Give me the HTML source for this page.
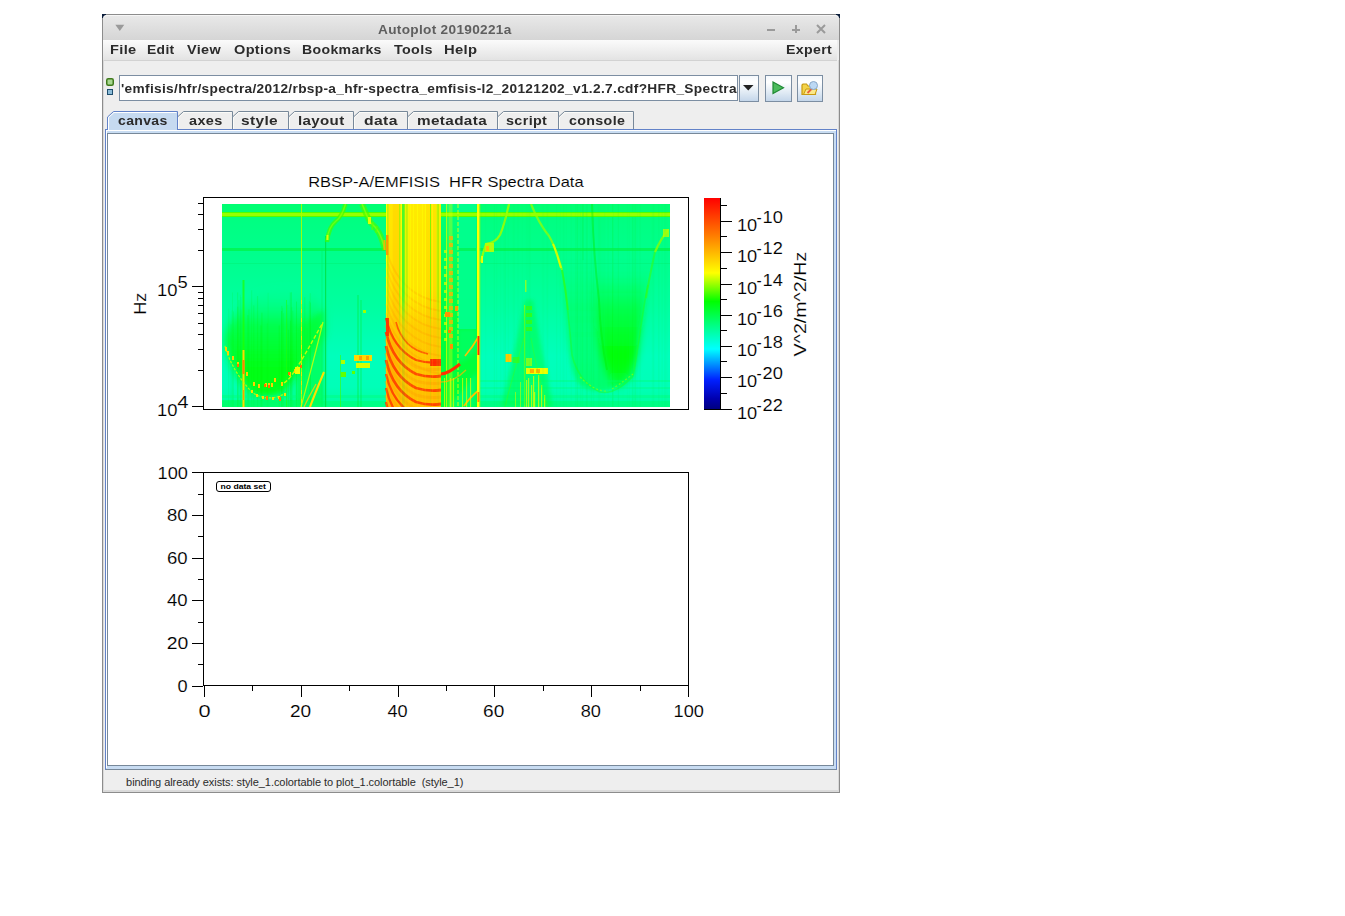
<!DOCTYPE html>
<html><head><meta charset="utf-8">
<style>
html,body{margin:0;padding:0;background:#fff;width:1345px;height:916px;overflow:hidden;position:relative;font-family:"Liberation Sans",sans-serif;}
.a{position:absolute;}
.t{position:absolute;white-space:nowrap;line-height:1;}
.b{font-weight:bold;}
#win{left:102px;top:14px;width:738px;height:779px;box-sizing:border-box;border:1px solid #8c8c8c;background:#eeeeee;}
#title{left:103px;top:15px;width:736px;height:25px;background:linear-gradient(#e9e9e9,#d5d5d5);border-radius:4px 4px 0 0;box-shadow:inset 0 1px 0 #f6f6f6;}
#menubar{left:103px;top:40px;width:734px;height:20px;background:linear-gradient(#fbfbfb,#e3e3e3);}
.menu{color:#2b2b2b;font-size:12.5px;font-weight:bold;top:44px;}
.tab{position:absolute;top:111px;height:18px;box-sizing:border-box;border:1px solid #7b8a9a;border-bottom:none;background:#eeeeee;}
.tabl{position:absolute;top:115px;font-size:12.5px;font-weight:bold;color:#2b2b2b;letter-spacing:0.7px;white-space:nowrap;line-height:1;}
.plt{font-size:16px;color:#111;}
</style></head><body>
<div id="win" class="a"></div>
<div class="a" style="left:102px;top:14px;width:4px;height:4px;background:#0b1d3a"></div><div class="a" style="left:836px;top:14px;width:4px;height:4px;background:#0b1d3a"></div><div id="title" class="a"></div>
<div class="t b" id="ttl" style="left:378.0px;top:23px;font-size:13px;color:#5e5e5e;letter-spacing:0.3px;;transform:scaleX(1.0482);transform-origin:0 0">Autoplot 20190221a</div>
<!-- window menu triangle -->
<svg class="a" style="left:115px;top:24px" width="10" height="8"><path d="M0.3 0.8 L9.3 0.8 L4.8 7 Z" fill="#9a9a9a"/></svg>
<!-- title buttons -->
<div class="a" style="left:767px;top:29px;width:8px;height:2px;background:#9a9a9a"></div>
<div class="a" style="left:792px;top:29px;width:8px;height:2px;background:#9a9a9a"></div>
<div class="a" style="left:795px;top:25px;width:2px;height:8px;background:#9a9a9a"></div>
<svg class="a" style="left:816px;top:24px" width="10" height="10"><path d="M1 1 L9 9 M9 1 L1 9" stroke="#9a9a9a" stroke-width="2"/></svg>
<div id="menubar" class="a"></div>
<div class="a" style="left:103px;top:60px;width:734px;height:1px;background:#d2d2d2"></div>
<div class="t menu" id="m0" style="left:110.4px;letter-spacing:0.3px;transform:scaleX(1.1673);transform-origin:0 0">File</div>
<div class="t menu" id="m1" style="left:146.6px;letter-spacing:0.3px;transform:scaleX(1.1093);transform-origin:0 0">Edit</div>
<div class="t menu" id="m2" style="left:186.8px;letter-spacing:0.3px;transform:scaleX(1.1534);transform-origin:0 0">View</div>
<div class="t menu" id="m3" style="left:233.8px;letter-spacing:0.3px;transform:scaleX(1.1605);transform-origin:0 0">Options</div>
<div class="t menu" id="m4" style="left:302.2px;letter-spacing:0.3px;transform:scaleX(1.1265);transform-origin:0 0">Bookmarks</div>
<div class="t menu" id="m5" style="left:394.4px;letter-spacing:0.3px;transform:scaleX(1.1441);transform-origin:0 0">Tools</div>
<div class="t menu" id="m6" style="left:443.8px;letter-spacing:0.3px;transform:scaleX(1.1828);transform-origin:0 0">Help</div>
<div class="t menu" id="m7" style="left:785.6px;letter-spacing:0.3px;transform:scaleX(1.1316);transform-origin:0 0">Expert</div>

<!-- toolbar -->
<svg class="a" style="left:106px;top:78px" width="9" height="18">
<rect x="0.75" y="0.75" width="6.5" height="6.5" rx="1.5" fill="#a8d890" stroke="#3f7a1c" stroke-width="1.5"/>
<rect x="1.5" y="11.5" width="5" height="5" fill="#8cbcd8" stroke="#1e4e6e" stroke-width="1"/>
</svg>
<div class="a" style="left:119px;top:75px;width:619px;height:26px;box-sizing:border-box;border:1px solid #7c8ea2;background:#fff;"></div>
<div class="a" style="left:120px;top:76px;width:617px;height:24px;overflow:hidden;">
<div class="t b" id="url" style="left:1.0px;top:7px;font-size:12.5px;color:#2b2b2b;letter-spacing:0.3px;;transform:scaleX(1.0945);transform-origin:0 0">'emfisis/hfr/spectra/2012/rbsp-a_hfr-spectra_emfisis-l2_20121202_v1.2.7.cdf?HFR_Spectra</div>
</div>
<div class="a" style="left:739px;top:75px;width:20px;height:27px;box-sizing:border-box;border:1px solid #7c8ea2;background:linear-gradient(#f4f8fc,#ffffff 25%,#dde8f3 70%,#c4d6ea);"></div>
<svg class="a" style="left:743px;top:85px" width="11" height="7"><path d="M0 0 L10.5 0 L5.25 5.5 Z" fill="#222"/></svg>
<div class="a" style="left:765px;top:75px;width:27px;height:27px;box-sizing:border-box;border:1px solid #7c8ea2;background:linear-gradient(#f4f8fc,#ffffff 25%,#dde8f3 70%,#c4d6ea);"></div>
<svg class="a" style="left:772px;top:81px" width="13" height="14"><path d="M1 1 L11.5 6.8 L1 12.6 Z" fill="#4cbb5c" stroke="#1f8a34" stroke-width="1.2"/></svg>
<div class="a" style="left:797px;top:75px;width:26px;height:27px;box-sizing:border-box;border:1px solid #7c8ea2;background:linear-gradient(#f4f8fc,#ffffff 25%,#dde8f3 70%,#c4d6ea);"></div>
<svg class="a" style="left:801px;top:80px" width="18" height="17">
<path d="M1 5 L1 14.5 L14.5 14.5 L14.5 6 L7 6 L5.5 4 L2 4 Z" fill="#f3d34a" stroke="#c89a10" stroke-width="1.2"/>
<path d="M2.5 14.5 L5 9 L16 9 L14 14.5 Z" fill="#fbe88a" stroke="#c89a10" stroke-width="1"/>
<path d="M6.5 13 L11 8.5" stroke="#e8603a" stroke-width="1.8"/>
<circle cx="12.5" cy="5.5" r="4" fill="#bcd8f4" stroke="#8aa8c8" stroke-width="1"/>
</svg>
<!-- canvas panel -->
<div class="a" style="left:105px;top:129px;width:732px;height:641px;box-sizing:border-box;border:1px solid #6282c8;border-bottom-color:#778899;background:#c8dcf2;"></div>
<div class="a" style="left:106px;top:130px;width:730px;height:1px;background:#fff"></div>
<div class="a" style="left:106px;top:130px;width:1px;height:638px;background:#fff"></div>
<div class="a" style="left:107px;top:133px;width:727px;height:633px;box-sizing:border-box;border:1px solid #778899;background:#fff;"></div>
<!-- tabs -->
<svg class="a" style="left:0;top:0" width="840" height="140">
<path d="M177.5 129 L177.5 117 L183.5 111.5 L232.5 111.5 L232.5 129" fill="#eeeeee" stroke="#778899" stroke-width="1"/>
<path d="M178.5 129 L178.5 117.5 L184 112.5 L231.5 112.5" fill="none" stroke="#fbfbf8" stroke-width="1"/>
<path d="M232.5 129 L232.5 117 L238.5 111.5 L288.5 111.5 L288.5 129" fill="#eeeeee" stroke="#778899" stroke-width="1"/>
<path d="M233.5 129 L233.5 117.5 L239 112.5 L287.5 112.5" fill="none" stroke="#fbfbf8" stroke-width="1"/>
<path d="M288.5 129 L288.5 117 L294.5 111.5 L353.5 111.5 L353.5 129" fill="#eeeeee" stroke="#778899" stroke-width="1"/>
<path d="M289.5 129 L289.5 117.5 L295 112.5 L352.5 112.5" fill="none" stroke="#fbfbf8" stroke-width="1"/>
<path d="M353.5 129 L353.5 117 L359.5 111.5 L407.5 111.5 L407.5 129" fill="#eeeeee" stroke="#778899" stroke-width="1"/>
<path d="M354.5 129 L354.5 117.5 L360 112.5 L406.5 112.5" fill="none" stroke="#fbfbf8" stroke-width="1"/>
<path d="M407.5 129 L407.5 117 L413.5 111.5 L497.5 111.5 L497.5 129" fill="#eeeeee" stroke="#778899" stroke-width="1"/>
<path d="M408.5 129 L408.5 117.5 L414 112.5 L496.5 112.5" fill="none" stroke="#fbfbf8" stroke-width="1"/>
<path d="M497.5 129 L497.5 117 L503.5 111.5 L558.5 111.5 L558.5 129" fill="#eeeeee" stroke="#778899" stroke-width="1"/>
<path d="M498.5 129 L498.5 117.5 L504 112.5 L557.5 112.5" fill="none" stroke="#fbfbf8" stroke-width="1"/>
<path d="M558.5 129 L558.5 117 L564.5 111.5 L633.5 111.5 L633.5 129" fill="#eeeeee" stroke="#778899" stroke-width="1"/>
<path d="M559.5 129 L559.5 117.5 L565 112.5 L632.5 112.5" fill="none" stroke="#fbfbf8" stroke-width="1"/>
<path d="M107.5 130 L107.5 117 L113.5 111.5 L177.5 111.5 L177.5 130" fill="#c6daf0" stroke="#6282c8" stroke-width="1"/>
<path d="M108.5 130 L108.5 117.5 L114 112.5 L176.5 112.5" fill="none" stroke="#ffffff" stroke-width="1"/>
</svg>
<div class="tabl" id="tb0" style="left:118.4px;letter-spacing:0.3px;transform:scaleX(1.1212);transform-origin:0 0">canvas</div>
<div class="tabl" id="tb1" style="left:188.8px;letter-spacing:0.3px;transform:scaleX(1.1553);transform-origin:0 0">axes</div>
<div class="tabl" id="tb2" style="left:240.8px;letter-spacing:0.3px;transform:scaleX(1.2357);transform-origin:0 0">style</div>
<div class="tabl" id="tb3" style="left:297.6px;letter-spacing:0.3px;transform:scaleX(1.2047);transform-origin:0 0">layout</div>
<div class="tabl" id="tb4" style="left:363.8px;letter-spacing:0.3px;transform:scaleX(1.2554);transform-origin:0 0">data</div>
<div class="tabl" id="tb5" style="left:417.2px;letter-spacing:0.3px;transform:scaleX(1.2227);transform-origin:0 0">metadata</div>
<div class="tabl" id="tb6" style="left:506.2px;letter-spacing:0.3px;transform:scaleX(1.1505);transform-origin:0 0">script</div>
<div class="tabl" id="tb7" style="left:568.6px;letter-spacing:0.3px;transform:scaleX(1.1390);transform-origin:0 0">console</div>
<svg class="a" style="left:0;top:0" width="1345" height="916">
<!--spec--><defs>
<clipPath id="spc"><rect x="222" y="204" width="448" height="203"/></clipPath>
<linearGradient id="bgv" gradientUnits="userSpaceOnUse" x1="0" y1="204" x2="0" y2="407">
<stop offset="0" stop-color="#00ff7c"/><stop offset="0.05" stop-color="#00ff80"/><stop offset="0.3" stop-color="#00ff90"/><stop offset="0.5" stop-color="#00ffa0"/>
<stop offset="0.75" stop-color="#00ffbc"/><stop offset="0.9" stop-color="#00ffb8"/><stop offset="1" stop-color="#00ff9c"/></linearGradient>
<linearGradient id="gU1" gradientUnits="userSpaceOnUse" x1="0" y1="285" x2="0" y2="395">
<stop offset="0" stop-color="#00ff90" stop-opacity="0"/><stop offset="0.35" stop-color="#00ff50"/><stop offset="0.75" stop-color="#00ff18"/><stop offset="1" stop-color="#00ff10"/></linearGradient>
<radialGradient id="gU2" cx="0.5" cy="0.45" r="0.5">
<stop offset="0" stop-color="#00ff00"/><stop offset="0.5" stop-color="#00ff18"/><stop offset="1" stop-color="#00ff60" stop-opacity="0"/></radialGradient>
<linearGradient id="ybv" gradientUnits="userSpaceOnUse" x1="0" y1="204" x2="0" y2="407">
<stop offset="0" stop-color="#ffe400"/><stop offset="0.4" stop-color="#ffdc00"/><stop offset="0.6" stop-color="#ffd000"/><stop offset="1" stop-color="#ffc400"/></linearGradient>
<linearGradient id="gbv" gradientUnits="userSpaceOnUse" x1="0" y1="204" x2="0" y2="407">
<stop offset="0" stop-color="#00ff80"/><stop offset="0.3" stop-color="#00ff60"/><stop offset="0.6" stop-color="#00ff40"/><stop offset="1" stop-color="#00ff38"/></linearGradient>
<filter id="bl4" filterUnits="userSpaceOnUse" x="200" y="180" width="500" height="250"><feGaussianBlur stdDeviation="4"/></filter>
<filter id="bl2" filterUnits="userSpaceOnUse" x="200" y="180" width="500" height="250"><feGaussianBlur stdDeviation="2"/></filter>
<filter id="bl1" filterUnits="userSpaceOnUse" x="200" y="180" width="500" height="250"><feGaussianBlur stdDeviation="0.7"/></filter>

</defs>
<g clip-path="url(#spc)">
<rect x="222" y="204" width="448" height="203" fill="url(#bgv)"/>
<path d="M224 340 C 232 300, 270 282, 300 290 C 315 295, 322 300, 324 310 L 324 335 C 312 350, 300 372, 284 392 C 272 400, 256 399, 248 390 C 238 378, 228 360, 224 340 Z" fill="url(#gU1)" filter="url(#bl4)"/>
<path d="M296 330 L 324 310 L 324 407 L 296 407 Z" fill="#00ff30" fill-opacity="0.6" filter="url(#bl2)"/>
<path d="M246 392 C 258 402, 275 402, 290 393 L 296 407 L 240 407 Z" fill="#00ff90" fill-opacity="0.55" filter="url(#bl2)"/>
<rect x="222" y="400" width="80" height="7" fill="#00ff50" fill-opacity="0.5"/>
<rect x="257.1" y="296.0" width="1" height="111.0" fill="#00f000" fill-opacity="0.19"/>
<rect x="233.0" y="311.4" width="1" height="95.6" fill="#00f000" fill-opacity="0.14"/>
<rect x="231.6" y="310.3" width="1" height="96.7" fill="#00f000" fill-opacity="0.09"/>
<rect x="267.6" y="292.8" width="1" height="114.2" fill="#00f000" fill-opacity="0.1"/>
<rect x="266.8" y="323.1" width="1" height="83.9" fill="#00f000" fill-opacity="0.1"/>
<rect x="247.4" y="315.1" width="1" height="91.9" fill="#00f000" fill-opacity="0.24"/>
<rect x="281.4" y="305.9" width="1" height="101.1" fill="#00f000" fill-opacity="0.25"/>
<rect x="230.5" y="324.3" width="1" height="82.7" fill="#00f000" fill-opacity="0.13"/>
<rect x="239.8" y="294.7" width="1" height="112.3" fill="#00f000" fill-opacity="0.13"/>
<rect x="304.3" y="297.2" width="1" height="109.8" fill="#00f000" fill-opacity="0.18"/>
<rect x="287.3" y="304.9" width="1" height="102.1" fill="#00f000" fill-opacity="0.17"/>
<rect x="232.0" y="292.4" width="1" height="114.6" fill="#00f000" fill-opacity="0.12"/>
<rect x="291.3" y="307.1" width="1" height="99.9" fill="#00f000" fill-opacity="0.13"/>
<rect x="282.2" y="308.1" width="1" height="98.9" fill="#00f000" fill-opacity="0.13"/>
<rect x="302.3" y="318.0" width="1" height="89.0" fill="#00f000" fill-opacity="0.12"/>
<rect x="281.1" y="311.0" width="1" height="96.0" fill="#00f000" fill-opacity="0.23"/>
<rect x="296.0" y="301.5" width="1" height="105.5" fill="#00f000" fill-opacity="0.25"/>
<rect x="237.3" y="306.7" width="1" height="100.3" fill="#00f000" fill-opacity="0.21"/>
<rect x="240.6" y="309.6" width="1" height="97.4" fill="#00f000" fill-opacity="0.09"/>
<rect x="290.1" y="320.6" width="1" height="86.4" fill="#00f000" fill-opacity="0.18"/>
<rect x="310.0" y="302.5" width="1" height="104.5" fill="#00f000" fill-opacity="0.2"/>
<rect x="283.1" y="313.2" width="1" height="93.8" fill="#00f000" fill-opacity="0.16"/>
<rect x="306.6" y="327.8" width="1" height="79.2" fill="#00f000" fill-opacity="0.16"/>
<rect x="289.8" y="292.4" width="1" height="114.6" fill="#00f000" fill-opacity="0.2"/>
<rect x="288.1" y="329.7" width="1" height="77.3" fill="#00f000" fill-opacity="0.22"/>
<rect x="253.3" y="305.4" width="1" height="101.6" fill="#00f000" fill-opacity="0.19"/>
<rect x="228.2" y="308.5" width="1" height="98.5" fill="#00f000" fill-opacity="0.11"/>
<rect x="237.2" y="292.4" width="1" height="114.6" fill="#00f000" fill-opacity="0.21"/>
<rect x="238.4" y="299.9" width="1" height="107.1" fill="#00f000" fill-opacity="0.15"/>
<rect x="309.7" y="293.2" width="1" height="113.8" fill="#00f000" fill-opacity="0.16"/>
<rect x="278.7" y="325.3" width="1" height="81.7" fill="#00f000" fill-opacity="0.22"/>
<rect x="308.9" y="301.1" width="1" height="105.9" fill="#00f000" fill-opacity="0.15"/>
<rect x="260.4" y="325.4" width="1" height="81.6" fill="#00f000" fill-opacity="0.24"/>
<rect x="240.5" y="297.0" width="1" height="110.0" fill="#00f000" fill-opacity="0.12"/>
<rect x="248.4" y="309.4" width="1" height="97.6" fill="#00f000" fill-opacity="0.18"/>
<rect x="251.2" y="290.2" width="1" height="116.8" fill="#00f000" fill-opacity="0.15"/>
<rect x="261.4" y="312.7" width="1" height="94.3" fill="#00f000" fill-opacity="0.24"/>
<rect x="292.3" y="310.6" width="1" height="96.4" fill="#00f000" fill-opacity="0.18"/>
<rect x="290.9" y="292.2" width="1" height="114.8" fill="#00f000" fill-opacity="0.23"/>
<rect x="300.9" y="325.0" width="1" height="82.0" fill="#00f000" fill-opacity="0.22"/>
<linearGradient id="gRU" gradientUnits="userSpaceOnUse" x1="0" y1="260" x2="0" y2="395">
<stop offset="0" stop-color="#00ff50" stop-opacity="0"/><stop offset="0.35" stop-color="#00ff48" stop-opacity="0.45"/><stop offset="1" stop-color="#00ff40" stop-opacity="0.6"/></linearGradient>
<linearGradient id="gRI" gradientUnits="userSpaceOnUse" x1="0" y1="275" x2="0" y2="390">
<stop offset="0" stop-color="#00ff30" stop-opacity="0"/><stop offset="0.35" stop-color="#00ff20" stop-opacity="0.6"/><stop offset="0.7" stop-color="#00ff00" stop-opacity="0.95"/><stop offset="1" stop-color="#00ff10" stop-opacity="0.7"/></linearGradient>
<path d="M553 240 C 560 260, 565 300, 567 330 C 569 360, 572 375, 580 385 C 592 394, 612 394, 632 377 C 638 345, 645 300, 652 268 C 656 255, 662 240, 668 232 L 640 225 L 580 225 Z" fill="url(#gRU)" filter="url(#bl2)"/>
<path d="M590 215 C 592 260, 594 300, 598 335 C 602 360, 606 378, 616 387 C 627 385, 633 372, 637 352 C 641 325, 645 295, 649 260 L 650 215 Z" fill="url(#gRI)" filter="url(#bl4)"/>
<rect x="602.5" y="204" width="1" height="203" fill="#00e800" fill-opacity="0.04"/>
<rect x="582.2" y="204" width="1" height="203" fill="#00e800" fill-opacity="0.05"/>
<rect x="579.4" y="204" width="1" height="203" fill="#00e800" fill-opacity="0.02"/>
<rect x="589.6" y="204" width="1" height="203" fill="#00e800" fill-opacity="0.03"/>
<rect x="598.8" y="204" width="1" height="203" fill="#00e800" fill-opacity="0.02"/>
<rect x="575.0" y="204" width="1" height="203" fill="#00e800" fill-opacity="0.03"/>
<rect x="582.1" y="204" width="1" height="203" fill="#00e800" fill-opacity="0.04"/>
<rect x="576.8" y="204" width="1" height="203" fill="#00e800" fill-opacity="0.06"/>
<rect x="618.0" y="204" width="1" height="203" fill="#00e800" fill-opacity="0.03"/>
<rect x="592.7" y="204" width="1" height="203" fill="#00e800" fill-opacity="0.04"/>
<rect x="600.5" y="204" width="1" height="203" fill="#00e800" fill-opacity="0.03"/>
<rect x="634.4" y="204" width="1" height="203" fill="#00e800" fill-opacity="0.07"/>
<rect x="607.6" y="204" width="1" height="203" fill="#00e800" fill-opacity="0.04"/>
<rect x="581.0" y="204" width="1" height="203" fill="#00e800" fill-opacity="0.03"/>
<rect x="599.0" y="204" width="1" height="203" fill="#00e800" fill-opacity="0.03"/>
<rect x="633.0" y="204" width="1" height="203" fill="#00e800" fill-opacity="0.03"/>
<rect x="576.6" y="204" width="1" height="203" fill="#00e800" fill-opacity="0.07"/>
<rect x="612.0" y="204" width="1" height="203" fill="#00e800" fill-opacity="0.03"/>
<rect x="613.0" y="204" width="1" height="203" fill="#00e800" fill-opacity="0.02"/>
<rect x="612.0" y="204" width="1" height="203" fill="#00e800" fill-opacity="0.07"/>
<rect x="635.4" y="204" width="1" height="203" fill="#00e800" fill-opacity="0.05"/>
<rect x="593.3" y="204" width="1" height="203" fill="#00e800" fill-opacity="0.04"/>
<rect x="586.7" y="204" width="1" height="203" fill="#00e800" fill-opacity="0.06"/>
<rect x="612.3" y="204" width="1" height="203" fill="#00e800" fill-opacity="0.06"/>
<rect x="598.1" y="204" width="1" height="203" fill="#00e800" fill-opacity="0.03"/>
<rect x="631.8" y="204" width="1" height="203" fill="#00e800" fill-opacity="0.07"/>
<rect x="634.7" y="204" width="1" height="203" fill="#00e800" fill-opacity="0.06"/>
<rect x="632.3" y="204" width="1" height="203" fill="#00e800" fill-opacity="0.06"/>
<rect x="590.9" y="204" width="1" height="203" fill="#00e800" fill-opacity="0.05"/>
<rect x="599.9" y="204" width="1" height="203" fill="#00e800" fill-opacity="0.02"/>
<rect x="222" y="395" width="448" height="3" fill="#00ff70" fill-opacity="0.35"/>
<rect x="222" y="401" width="448" height="6" fill="#00ff60" fill-opacity="0.4"/>
<rect x="480" y="380" width="190" height="2" fill="#00ff70" fill-opacity="0.35"/>
<rect x="480" y="387" width="190" height="2" fill="#00ff70" fill-opacity="0.3"/>
<rect x="222" y="204" width="448" height="8" fill="#00ff60" fill-opacity="0.35"/>
<rect x="222" y="212" width="448" height="5" fill="#50ff00"/>
<rect x="222" y="213" width="448" height="3" fill="#98ff00"/>
<rect x="222" y="248" width="448" height="3" fill="#00f448" fill-opacity="0.75"/>
<rect x="222" y="263" width="448" height="1" fill="#00f070" fill-opacity="0.45"/>
<rect x="301" y="204" width="1" height="203" fill="#a8ff00" fill-opacity="0.9"/>
<rect x="301" y="300" width="1" height="4" fill="#ffe000" fill-opacity="0.8"/>
<rect x="301" y="309" width="1" height="4" fill="#ffe000" fill-opacity="0.8"/>
<rect x="301" y="318" width="1" height="4" fill="#ffe000" fill-opacity="0.8"/>
<rect x="301" y="327" width="1" height="4" fill="#ffe000" fill-opacity="0.8"/>
<rect x="301" y="336" width="1" height="4" fill="#ffe000" fill-opacity="0.8"/>
<rect x="301" y="345" width="1" height="4" fill="#ffe000" fill-opacity="0.8"/>
<rect x="301" y="354" width="1" height="4" fill="#ffe000" fill-opacity="0.8"/>
<rect x="301" y="363" width="1" height="4" fill="#ffe000" fill-opacity="0.8"/>
<rect x="301" y="372" width="1" height="4" fill="#ffe000" fill-opacity="0.8"/>
<rect x="301" y="381" width="1" height="4" fill="#ffe000" fill-opacity="0.8"/>
<rect x="301" y="390" width="1" height="4" fill="#ffe000" fill-opacity="0.8"/>
<rect x="301" y="399" width="1" height="4" fill="#ffe000" fill-opacity="0.8"/>
<rect x="242.5" y="280" width="2" height="127" fill="#20ff00" fill-opacity="0.7"/>
<rect x="242.5" y="350" width="2" height="57" fill="#ffd800"/>
<rect x="242.5" y="360" width="2" height="14" fill="#ff8000"/>
<rect x="243" y="390" width="1" height="10" fill="#ff9000" fill-opacity="0.8"/>
<rect x="325" y="236" width="1.2" height="171" fill="#00e040" fill-opacity="0.8"/>
<rect x="321.5" y="250" width="1" height="157" fill="#00f060" fill-opacity="0.5"/>
<rect x="357.5" y="295" width="1" height="112" fill="#00f040" fill-opacity="0.7"/>
<rect x="360.5" y="300" width="1" height="107" fill="#00f040" fill-opacity="0.6"/>
<rect x="340" y="355" width="1" height="52" fill="#40ff00" fill-opacity="0.6"/>
<rect x="286" y="300" width="1" height="107" fill="#20ff00" fill-opacity="0.5"/>
<path d="M225 346 C 229 362, 240 380, 252 392 C 260 399, 274 400, 284 394" fill="none" stroke="#c0ff00" stroke-width="1.2" stroke-opacity="0.85" stroke-dasharray="2.5 1.5"/>
<path d="M284 383 C 292 378, 302 360, 322 324" fill="none" stroke="#d0ff00" stroke-width="1.4" stroke-opacity="0.9" stroke-dasharray="4 2"/>
<rect x="225" y="347" width="2" height="4" fill="#ffd000" fill-opacity="1.0"/>
<rect x="227" y="351" width="2" height="4" fill="#ffd000" fill-opacity="1.0"/>
<rect x="232" y="356" width="2" height="4" fill="#ffd000" fill-opacity="1.0"/>
<rect x="237" y="362" width="2" height="4" fill="#ffd000" fill-opacity="1.0"/>
<rect x="246" y="372" width="2" height="4" fill="#ffd000" fill-opacity="1.0"/>
<rect x="253" y="382" width="2" height="4" fill="#ffd000" fill-opacity="1.0"/>
<rect x="258" y="384" width="2" height="4" fill="#ffd000" fill-opacity="1.0"/>
<rect x="265" y="383" width="2" height="4" fill="#ffd000" fill-opacity="1.0"/>
<rect x="268" y="383" width="2" height="4" fill="#ffd000" fill-opacity="1.0"/>
<rect x="271" y="383" width="2" height="4" fill="#ffd000" fill-opacity="1.0"/>
<rect x="274" y="378" width="2" height="4" fill="#ffd000" fill-opacity="1.0"/>
<rect x="281" y="382" width="2" height="4" fill="#ffd000" fill-opacity="1.0"/>
<rect x="289" y="372" width="2" height="4" fill="#ffd000" fill-opacity="1.0"/>
<rect x="294" y="369" width="2" height="4" fill="#ffd000" fill-opacity="1.0"/>
<rect x="237" y="364" width="2" height="3" fill="#ff7000" fill-opacity="1.0"/>
<rect x="264" y="384" width="2" height="3" fill="#ff7000" fill-opacity="1.0"/>
<rect x="268" y="385" width="2" height="3" fill="#ff7000" fill-opacity="1.0"/>
<rect x="288" y="372" width="2" height="3" fill="#ff7000" fill-opacity="1.0"/>
<rect x="300" y="365" width="2" height="3" fill="#ff7000" fill-opacity="1.0"/>
<rect x="295" y="367" width="5" height="7" fill="#eeff00"/>
<rect x="251" y="390" width="2" height="3" fill="#ffe000" fill-opacity="1.0"/>
<rect x="256" y="394" width="2" height="3" fill="#ffe000" fill-opacity="1.0"/>
<rect x="262" y="396" width="2" height="3" fill="#ffe000" fill-opacity="1.0"/>
<rect x="266" y="397" width="2" height="3" fill="#ffe000" fill-opacity="1.0"/>
<rect x="272" y="397" width="2" height="3" fill="#ffe000" fill-opacity="1.0"/>
<rect x="278" y="396" width="2" height="3" fill="#ffe000" fill-opacity="1.0"/>
<rect x="284" y="393" width="2" height="3" fill="#ffe000" fill-opacity="1.0"/>
<rect x="266" y="396" width="2" height="4" fill="#ff8000" fill-opacity="1.0"/>
<rect x="279" y="397" width="2" height="4" fill="#ff8000" fill-opacity="1.0"/>
<path d="M301 407 C 306 388, 314 360, 323 322" fill="none" stroke="#d8ff00" stroke-width="1.2" stroke-opacity="0.8"/>
<path d="M310 407 C 314 396, 319 384, 324 372" fill="none" stroke="#ffe000" stroke-width="2"/>
<path d="M304 407 C 309 396, 313 390, 316 384" fill="none" stroke="#ffd000" stroke-width="1.2" stroke-opacity="0.8"/>
<path d="M327 242 C 328 232, 331 225, 336 221 C 340 218, 343 213, 345.5 204" fill="none" stroke="#40ff00" stroke-width="4.5" stroke-opacity="0.7" filter="url(#bl1)"/>
<path d="M327 240 C 328 231, 331 225, 336 221 C 340 218, 343 213, 345.5 204" fill="none" stroke="#a8ff00" stroke-width="1.4" stroke-opacity="0.55"/>
<path d="M362 204 C 365 210, 367 218, 371 223 C 377 228, 381 234, 385 250" fill="none" stroke="#40ff00" stroke-width="6" stroke-opacity="0.65" filter="url(#bl1)"/>
<path d="M362 204 C 365 210, 367 218, 371 223 C 377 228, 381 234, 385 250" fill="none" stroke="#b0ff00" stroke-width="1.6" stroke-opacity="0.55"/>
<rect x="368" y="217" width="3" height="7" fill="#f0ff00" fill-opacity="0.9"/>
<rect x="326.5" y="235" width="2" height="5" fill="#e8ff00" fill-opacity="0.9"/>
<rect x="383.5" y="240" width="2" height="10" fill="#ffb000" fill-opacity="0.9"/>
<path d="M373 222 L 372 230 M 377 226 L 376 233" fill="none" stroke="#60ff00" stroke-width="1.5" stroke-opacity="0.7"/>
<rect x="341" y="360" width="4" height="4" fill="#b0ff00"/>
<rect x="341" y="372" width="5" height="5" fill="#60ff00"/>
<rect x="352" y="371" width="3" height="3" fill="#60ff00"/>
<rect x="354" y="355" width="18" height="6" fill="#ffd800"/>
<rect x="356" y="363" width="14" height="5" fill="#d8ff00"/>
<rect x="363" y="310" width="3" height="3" fill="#a0ff00"/>
<rect x="359" y="356" width="3" height="4" fill="#ffa000"/>
<rect x="366" y="356" width="3" height="4" fill="#ffa000"/>
<rect x="386" y="204" width="55" height="203" fill="url(#ybv)"/>
<path d="M386 250 C 395 280, 412 298, 441 302" fill="none" stroke="#ffa000" stroke-width="2" stroke-opacity="0.35"/>
<path d="M386 259 C 395 289, 412 307, 441 311" fill="none" stroke="#ffa000" stroke-width="2" stroke-opacity="0.35"/>
<path d="M386 268 C 395 298, 412 316, 441 320" fill="none" stroke="#ffa000" stroke-width="2" stroke-opacity="0.35"/>
<path d="M386 277 C 395 307, 412 325, 441 329" fill="none" stroke="#ffa000" stroke-width="2" stroke-opacity="0.35"/>
<path d="M386 286 C 395 316, 412 334, 441 338" fill="none" stroke="#ffa000" stroke-width="2" stroke-opacity="0.35"/>
<path d="M386 295 C 395 325, 412 343, 441 347" fill="none" stroke="#ffa000" stroke-width="2" stroke-opacity="0.35"/>
<path d="M386 304 C 395 334, 412 352, 441 356" fill="none" stroke="#ffa000" stroke-width="2" stroke-opacity="0.35"/>
<path d="M386 313 C 395 343, 412 361, 441 365" fill="none" stroke="#ffa000" stroke-width="2" stroke-opacity="0.35"/>
<path d="M386 322 C 395 352, 412 370, 441 374" fill="none" stroke="#ffa000" stroke-width="2" stroke-opacity="0.35"/>
<linearGradient id="stf" gradientUnits="userSpaceOnUse" x1="0" y1="204" x2="0" y2="407">
<stop offset="0" stop-color="#fff" stop-opacity="1"/><stop offset="0.45" stop-color="#fff" stop-opacity="1"/><stop offset="0.6" stop-color="#fff" stop-opacity="0.25"/><stop offset="1" stop-color="#fff" stop-opacity="0.15"/></linearGradient>
<mask id="stm" maskUnits="userSpaceOnUse" x="380" y="204" width="70" height="203"><rect x="380" y="204" width="70" height="203" fill="url(#stf)"/></mask>
<linearGradient id="orl" gradientUnits="userSpaceOnUse" x1="0" y1="290" x2="0" y2="407">
<stop offset="0" stop-color="#ff9800" stop-opacity="0"/><stop offset="0.3" stop-color="#ff9800" stop-opacity="0.2"/><stop offset="1" stop-color="#ff9000" stop-opacity="0.3"/></linearGradient>
<rect x="386" y="290" width="55" height="117" fill="url(#orl)" fill-opacity="0.6"/>
<path d="M386 325 C 390 343, 400 359, 416 367 C 426 370, 434 370, 441 369" fill="none" stroke="#ff9a00" stroke-width="3" stroke-opacity="0.4"/>
<path d="M386 339 C 390 357, 400 373, 416 381 C 426 384, 434 384, 441 383" fill="none" stroke="#ff9a00" stroke-width="3" stroke-opacity="0.4"/>
<path d="M386 353 C 390 371, 400 387, 416 395 C 426 398, 434 398, 441 397" fill="none" stroke="#ff9a00" stroke-width="3" stroke-opacity="0.4"/>
<path d="M386 367 C 390 385, 400 401, 416 409 C 426 412, 434 412, 441 411" fill="none" stroke="#ff9a00" stroke-width="3" stroke-opacity="0.4"/>
<path d="M386 381 C 390 399, 400 415, 416 423 C 426 426, 434 426, 441 425" fill="none" stroke="#ff9a00" stroke-width="3" stroke-opacity="0.4"/>
<path d="M386 395 C 390 413, 400 429, 416 437 C 426 440, 434 440, 441 439" fill="none" stroke="#ff9a00" stroke-width="3" stroke-opacity="0.4"/>
<path d="M386 318 C 390 336, 400 352, 416 360 C 426 363, 434 363, 441 362" fill="none" stroke="#ff3000" stroke-width="2.3" stroke-opacity="0.85"/>
<path d="M386 332 C 390 350, 400 366, 416 374 C 426 377, 434 377, 441 376" fill="none" stroke="#ff3000" stroke-width="2.8" stroke-opacity="0.85"/>
<path d="M386 346 C 390 364, 400 380, 416 388 C 426 391, 434 391, 441 390" fill="none" stroke="#ff3000" stroke-width="2.8" stroke-opacity="0.85"/>
<path d="M386 360 C 390 378, 400 394, 416 402 C 426 405, 434 405, 441 404" fill="none" stroke="#ff3000" stroke-width="2.8" stroke-opacity="0.85"/>
<path d="M386 374 C 390 392, 400 408, 416 416 C 426 419, 434 419, 441 418" fill="none" stroke="#ff3000" stroke-width="2.3" stroke-opacity="0.85"/>
<path d="M386 388 C 390 406, 400 422, 416 430 C 426 433, 434 433, 441 432" fill="none" stroke="#ff3000" stroke-width="2.3" stroke-opacity="0.85"/>
<path d="M386 402 C 390 420, 400 436, 416 444 C 426 447, 434 447, 441 446" fill="none" stroke="#ff3000" stroke-width="2.3" stroke-opacity="0.85"/>
<path d="M396 322 C 400 338, 410 350, 428 354" fill="none" stroke="#ff4000" stroke-width="1.6" stroke-opacity="0.8"/>
<rect x="430" y="359" width="11" height="7" fill="#ff2800" fill-opacity="0.95"/>
<g mask="url(#stm)">
<rect x="386" y="204" width="1.3" height="203" fill="#ffff00" fill-opacity="0.9"/>
<rect x="387.4" y="204" width="1" height="203" fill="#70ff00" fill-opacity="0.7"/>
<rect x="388.5" y="204" width="4" height="203" fill="#ffee00" fill-opacity="0.3"/>
<rect x="392.8" y="204" width="6.5" height="203" fill="#ffc000" fill-opacity="0.2"/>
<rect x="399.4" y="204" width="1.1" height="203" fill="#60ff00" fill-opacity="0.8"/>
<rect x="400.5" y="204" width="1.5" height="203" fill="#ffff00" fill-opacity="0.8"/>
<rect x="402" y="204" width="2.8" height="203" fill="#20ff30" fill-opacity="0.8"/>
<rect x="404.8" y="204" width="1.7" height="203" fill="#e0ff00" fill-opacity="0.7"/>
<rect x="406.5" y="204" width="1" height="203" fill="#70ff00" fill-opacity="0.7"/>
<rect x="407.8" y="204" width="1.5" height="203" fill="#f0ff00" fill-opacity="0.7"/>
<rect x="410" y="204" width="1" height="203" fill="#ffff00" fill-opacity="0.5"/>
<rect x="413" y="204" width="1" height="203" fill="#ffff00" fill-opacity="0.5"/>
<rect x="417" y="204" width="1" height="203" fill="#ffff00" fill-opacity="0.6"/>
<rect x="422" y="204" width="1" height="203" fill="#ffff00" fill-opacity="0.5"/>
<rect x="425" y="204" width="1" height="203" fill="#ffff00" fill-opacity="0.7"/>
<rect x="430" y="204" width="1" height="203" fill="#50ff00" fill-opacity="0.7"/>
<rect x="432" y="204" width="1" height="203" fill="#ffff00" fill-opacity="0.6"/>
<rect x="436.5" y="204" width="1.1" height="203" fill="#c0ff00" fill-opacity="0.7"/>
<rect x="437.6" y="204" width="1" height="203" fill="#50ff00" fill-opacity="0.7"/>
<rect x="439" y="204" width="2" height="203" fill="#f0ff00" fill-opacity="0.5"/>
<rect x="409" y="204" width="16" height="203" fill="#ffff00" fill-opacity="0.25"/>
</g>
<rect x="386" y="235" width="2.5" height="20" fill="#ff9000" fill-opacity="0.9"/>
<rect x="386" y="318" width="3" height="18" fill="#ff3000" fill-opacity="0.9"/>
<rect x="441" y="204" width="36" height="203" fill="url(#gbv)"/>
<rect x="458" y="204" width="18" height="125" fill="#00ff90" fill-opacity="0.9"/>
<path d="M458 329 L 476 329 L 476 350 C 470 358, 462 362, 458 362 Z" fill="#00ff80" fill-opacity="0.5" filter="url(#bl2)"/>
<path d="M448 407 C 458 396, 468 385, 476 372 L 476 407 Z" fill="#00ff90" fill-opacity="0.6" filter="url(#bl2)"/>
<rect x="441" y="212" width="36" height="5" fill="#50ff00"/>
<rect x="441" y="213" width="36" height="3" fill="#98ff00"/>
<rect x="458" y="248" width="18" height="3" fill="#00f040" fill-opacity="0.6"/>
<rect x="446" y="204" width="1.2" height="203" fill="#d0ff00" fill-opacity="0.8"/>
<rect x="457.5" y="204" width="1" height="4" fill="#f0ff00" fill-opacity="0.85"/>
<rect x="457.5" y="210" width="1" height="4" fill="#f0ff00" fill-opacity="0.85"/>
<rect x="457.5" y="216" width="1" height="4" fill="#f0ff00" fill-opacity="0.85"/>
<rect x="457.5" y="222" width="1" height="4" fill="#f0ff00" fill-opacity="0.85"/>
<rect x="457.5" y="228" width="1" height="4" fill="#f0ff00" fill-opacity="0.85"/>
<rect x="457.5" y="234" width="1" height="4" fill="#f0ff00" fill-opacity="0.85"/>
<rect x="457.5" y="240" width="1" height="4" fill="#f0ff00" fill-opacity="0.85"/>
<rect x="457.5" y="246" width="1" height="4" fill="#f0ff00" fill-opacity="0.85"/>
<rect x="457.5" y="252" width="1" height="4" fill="#f0ff00" fill-opacity="0.85"/>
<rect x="457.5" y="258" width="1" height="4" fill="#f0ff00" fill-opacity="0.85"/>
<rect x="457.5" y="264" width="1" height="4" fill="#f0ff00" fill-opacity="0.85"/>
<rect x="457.5" y="270" width="1" height="4" fill="#f0ff00" fill-opacity="0.85"/>
<rect x="457.5" y="276" width="1" height="4" fill="#f0ff00" fill-opacity="0.85"/>
<rect x="457.5" y="282" width="1" height="4" fill="#f0ff00" fill-opacity="0.85"/>
<rect x="457.5" y="288" width="1" height="4" fill="#f0ff00" fill-opacity="0.85"/>
<rect x="457.5" y="294" width="1" height="4" fill="#f0ff00" fill-opacity="0.85"/>
<rect x="457.5" y="300" width="1" height="4" fill="#f0ff00" fill-opacity="0.85"/>
<rect x="457.5" y="306" width="1" height="4" fill="#f0ff00" fill-opacity="0.85"/>
<rect x="457.5" y="312" width="1" height="4" fill="#f0ff00" fill-opacity="0.85"/>
<rect x="457.5" y="318" width="1" height="4" fill="#f0ff00" fill-opacity="0.85"/>
<rect x="457.5" y="324" width="1" height="4" fill="#f0ff00" fill-opacity="0.85"/>
<rect x="457.5" y="330" width="1" height="4" fill="#f0ff00" fill-opacity="0.85"/>
<rect x="457.5" y="336" width="1" height="4" fill="#f0ff00" fill-opacity="0.85"/>
<rect x="457.5" y="342" width="1" height="4" fill="#f0ff00" fill-opacity="0.85"/>
<rect x="457.5" y="348" width="1" height="4" fill="#f0ff00" fill-opacity="0.85"/>
<rect x="457.5" y="354" width="1" height="4" fill="#f0ff00" fill-opacity="0.85"/>
<rect x="457.5" y="360" width="1" height="4" fill="#f0ff00" fill-opacity="0.85"/>
<rect x="457.5" y="366" width="1" height="4" fill="#f0ff00" fill-opacity="0.85"/>
<rect x="457.5" y="372" width="1" height="4" fill="#f0ff00" fill-opacity="0.85"/>
<rect x="457.5" y="378" width="1" height="4" fill="#f0ff00" fill-opacity="0.85"/>
<rect x="457.5" y="384" width="1" height="4" fill="#f0ff00" fill-opacity="0.85"/>
<rect x="457.5" y="390" width="1" height="4" fill="#f0ff00" fill-opacity="0.85"/>
<rect x="457.5" y="396" width="1" height="4" fill="#f0ff00" fill-opacity="0.85"/>
<rect x="457.5" y="402" width="1" height="4" fill="#f0ff00" fill-opacity="0.85"/>
<rect x="448.5" y="204" width="4" height="203" fill="#e8ff00" fill-opacity="0.35"/>
<rect x="449" y="236" width="4" height="4" fill="#ffb000" fill-opacity="0.75"/>
<rect x="449" y="243" width="4" height="4" fill="#ffb000" fill-opacity="0.75"/>
<rect x="449" y="250" width="4" height="4" fill="#ffb000" fill-opacity="0.75"/>
<rect x="449" y="257" width="4" height="4" fill="#ffb000" fill-opacity="0.75"/>
<rect x="449" y="264" width="4" height="4" fill="#ffb000" fill-opacity="0.75"/>
<rect x="449" y="271" width="4" height="4" fill="#ffb000" fill-opacity="0.75"/>
<rect x="449" y="278" width="4" height="4" fill="#ffb000" fill-opacity="0.75"/>
<rect x="449" y="285" width="4" height="4" fill="#ffb000" fill-opacity="0.75"/>
<rect x="449" y="292" width="4" height="4" fill="#ffb000" fill-opacity="0.75"/>
<rect x="449" y="299" width="4" height="4" fill="#ffb000" fill-opacity="0.75"/>
<rect x="449" y="306" width="4" height="4" fill="#ffb000" fill-opacity="0.75"/>
<rect x="449" y="313" width="4" height="4" fill="#ffb000" fill-opacity="0.75"/>
<rect x="449" y="320" width="4" height="4" fill="#ffb000" fill-opacity="0.75"/>
<rect x="449" y="327" width="4" height="4" fill="#ffb000" fill-opacity="0.75"/>
<rect x="449" y="334" width="4" height="4" fill="#ffb000" fill-opacity="0.75"/>
<rect x="444" y="250" width="3" height="3" fill="#e0ff00" fill-opacity="0.7"/>
<rect x="444" y="258" width="3" height="3" fill="#e0ff00" fill-opacity="0.7"/>
<rect x="444" y="266" width="3" height="3" fill="#e0ff00" fill-opacity="0.7"/>
<rect x="444" y="274" width="3" height="3" fill="#e0ff00" fill-opacity="0.7"/>
<rect x="444" y="282" width="3" height="3" fill="#e0ff00" fill-opacity="0.7"/>
<rect x="444" y="290" width="3" height="3" fill="#e0ff00" fill-opacity="0.7"/>
<rect x="444" y="298" width="3" height="3" fill="#e0ff00" fill-opacity="0.7"/>
<rect x="444" y="306" width="3" height="3" fill="#e0ff00" fill-opacity="0.7"/>
<rect x="444" y="314" width="3" height="3" fill="#e0ff00" fill-opacity="0.7"/>
<rect x="444" y="322" width="3" height="3" fill="#e0ff00" fill-opacity="0.7"/>
<rect x="444" y="330" width="3" height="3" fill="#e0ff00" fill-opacity="0.7"/>
<rect x="444" y="338" width="3" height="3" fill="#e0ff00" fill-opacity="0.7"/>
<rect x="455" y="306" width="3" height="5" fill="#ffa000"/>
<rect x="445" y="312" width="5" height="5" fill="#ff9000"/>
<rect x="450" y="344" width="3" height="5" fill="#ff9000"/>
<rect x="448" y="330" width="3" height="3" fill="#ff8000"/>
<path d="M441 374 C 448 374, 455 368, 460 364" fill="none" stroke="#ff3000" stroke-width="3"/>
<path d="M441 382 C 450 382, 458 378, 466 370" fill="none" stroke="#ffb000" stroke-width="1.5" stroke-opacity="0.7"/>
<path d="M465 356 C 470 350, 475 343, 479 336" fill="none" stroke="#ffc000" stroke-width="1.6"/>
<path d="M464 406 C 468 400, 474 394, 479 390" fill="none" stroke="#ffc000" stroke-width="1.8"/>
<rect x="444" y="378" width="1.1" height="29" fill="#e0ff00" fill-opacity="0.7"/>
<rect x="450" y="378" width="1.1" height="29" fill="#e0ff00" fill-opacity="0.7"/>
<rect x="453" y="378" width="1.1" height="29" fill="#e0ff00" fill-opacity="0.7"/>
<rect x="462" y="378" width="1.1" height="29" fill="#e0ff00" fill-opacity="0.7"/>
<rect x="466" y="378" width="1.1" height="29" fill="#e0ff00" fill-opacity="0.7"/>
<rect x="470" y="378" width="1.1" height="29" fill="#e0ff00" fill-opacity="0.7"/>
<rect x="477" y="204" width="2.5" height="203" fill="#ffff00"/>
<rect x="477.5" y="336" width="2" height="19" fill="#ff3000"/>
<rect x="477.5" y="392" width="2" height="10" fill="#ff9000"/>
<rect x="479.5" y="204" width="1" height="203" fill="#a0ff00" fill-opacity="0.5"/>
<path d="M481 262 C 482 256, 484 250, 486 244 C 490 243, 495 243, 500 235 C 503 228, 506 218, 509 204" fill="none" stroke="#a0ff00" stroke-width="2.2" stroke-opacity="0.9"/>
<rect x="485" y="243" width="9" height="9" fill="#c0ff00" fill-opacity="0.9"/>
<rect x="486" y="246" width="3" height="5" fill="#ffc000"/>
<rect x="481" y="256" width="2" height="7" fill="#f0ff00"/>
<path d="M562 270 C 566 290, 569 320, 572 355 C 576 372, 586 386, 600 392 C 610 394, 622 388, 633 376 C 638 350, 644 300, 648 285" fill="none" stroke="#20ff20" stroke-width="1.6" stroke-opacity="0.45"/>
<path d="M531 204 C 535 214, 540 225, 549 236 C 554 244, 558 256, 562 270" fill="none" stroke="#98ff00" stroke-width="2.2" stroke-opacity="0.75"/>
<path d="M562 270 C 565 285, 567 300, 568 310" fill="none" stroke="#40ff00" stroke-width="2" stroke-opacity="0.5"/>
<path d="M646 298 C 648 285, 651 270, 655 252" fill="none" stroke="#40ff00" stroke-width="2" stroke-opacity="0.5"/>
<path d="M655 252 C 659 243, 663 236, 668 230" fill="none" stroke="#90ff00" stroke-width="2.2" stroke-opacity="0.8"/>
<rect x="663" y="229" width="6" height="8" fill="#b8ff00" fill-opacity="0.8"/>
<path d="M553 244 C 556 250, 558 258, 561 268" fill="none" stroke="#d8ff00" stroke-width="2"/>
<path d="M580 377 C 590 387, 600 392, 608 391 M 612 389 C 620 384, 628 378, 633 374" fill="none" stroke="#a0ff00" stroke-width="1.2" stroke-opacity="0.6" stroke-dasharray="2 2"/>
<path d="M592 204 C 593 240, 596 275, 599 300 C 600 330, 603 350, 607 370" fill="none" stroke="#00ee00" stroke-width="2" stroke-opacity="0.4" filter="url(#bl1)"/>
<path d="M583 204 L 583 260" fill="none" stroke="#00f050" stroke-width="1" stroke-opacity="0.4"/>
<rect x="524" y="305" width="1.2" height="102" fill="#c0ff00" fill-opacity="0.9"/>
<path d="M525 300 L 533 300 C 540 340, 548 380, 553 407 L 500 407 C 510 380, 518 330, 525 300 Z" fill="#00ff40" fill-opacity="0.55" filter="url(#bl2)"/>
<rect x="526" y="306" width="6" height="4" fill="#40ff00" fill-opacity="0.7"/>
<rect x="526" y="313" width="6" height="4" fill="#40ff00" fill-opacity="0.7"/>
<rect x="526" y="320" width="6" height="4" fill="#40ff00" fill-opacity="0.7"/>
<rect x="526" y="327" width="6" height="4" fill="#40ff00" fill-opacity="0.7"/>
<rect x="505.5" y="354" width="6" height="8" fill="#ffc800"/>
<rect x="515" y="392" width="1" height="15" fill="#c0ff00" fill-opacity="0.6"/>
<rect x="520" y="382" width="1" height="25" fill="#c0ff00" fill-opacity="0.6"/>
<rect x="512.5" y="357" width="7" height="6" fill="#40ff00" fill-opacity="0.6"/>
<rect x="526" y="368" width="22" height="6" fill="#f0ff00"/>
<rect x="530" y="369" width="4" height="4" fill="#ffb000"/>
<rect x="536" y="369" width="4" height="4" fill="#ffb000"/>
<rect x="526" y="358" width="6" height="8" fill="#b0ff00" fill-opacity="0.7"/>
<rect x="528" y="378" width="1.2" height="29" fill="#e0ff00" fill-opacity="0.75"/>
<rect x="531" y="385" width="1.2" height="22" fill="#e0ff00" fill-opacity="0.75"/>
<rect x="534" y="392" width="1.2" height="15" fill="#e0ff00" fill-opacity="0.75"/>
<rect x="538" y="375" width="1.2" height="32" fill="#e0ff00" fill-opacity="0.75"/>
<rect x="526" y="380" width="1.2" height="27" fill="#e0ff00" fill-opacity="0.75"/>
<rect x="533" y="376" width="1.2" height="31" fill="#e0ff00" fill-opacity="0.75"/>
<rect x="541" y="385" width="1.2" height="22" fill="#e0ff00" fill-opacity="0.75"/>
<rect x="544" y="395" width="1.2" height="12" fill="#e0ff00" fill-opacity="0.75"/>
<path d="M505 407 C 510 385, 518 360, 524 338" fill="none" stroke="#50ff00" stroke-width="1.2" stroke-opacity="0.3"/>
<path d="M548 407 C 540 385, 535 360, 531 338" fill="none" stroke="#50ff00" stroke-width="1.2" stroke-opacity="0.3"/>
<rect x="525" y="280" width="1.5" height="12" fill="#c0ff00" fill-opacity="0.7"/>
<rect x="485.3" y="204" width="1" height="203" fill="#00f060" fill-opacity="0.05"/>
<rect x="529.2" y="204" width="1" height="203" fill="#00f060" fill-opacity="0.08"/>
<rect x="661.7" y="204" width="1" height="203" fill="#00f060" fill-opacity="0.06"/>
<rect x="658.0" y="204" width="1" height="203" fill="#00f060" fill-opacity="0.1"/>
<rect x="661.5" y="204" width="1" height="203" fill="#00f060" fill-opacity="0.06"/>
<rect x="521.9" y="204" width="1" height="203" fill="#00f060" fill-opacity="0.05"/>
<rect x="517.4" y="204" width="1" height="203" fill="#00f060" fill-opacity="0.04"/>
<rect x="598.6" y="204" width="1" height="203" fill="#00f060" fill-opacity="0.09"/>
<rect x="639.7" y="204" width="1" height="203" fill="#00f060" fill-opacity="0.06"/>
<rect x="604.1" y="204" width="1" height="203" fill="#00f060" fill-opacity="0.09"/>
<rect x="496.1" y="204" width="1" height="203" fill="#00f060" fill-opacity="0.08"/>
<rect x="652.9" y="204" width="1" height="203" fill="#00f060" fill-opacity="0.08"/>
<rect x="622.5" y="204" width="1" height="203" fill="#00f060" fill-opacity="0.06"/>
<rect x="513.9" y="204" width="1" height="203" fill="#00f060" fill-opacity="0.09"/>
<rect x="543.2" y="204" width="1" height="203" fill="#00f060" fill-opacity="0.09"/>
<rect x="664.6" y="204" width="1" height="203" fill="#00f060" fill-opacity="0.06"/>
<rect x="556.3" y="204" width="1" height="203" fill="#00f060" fill-opacity="0.1"/>
<rect x="617.7" y="204" width="1" height="203" fill="#00f060" fill-opacity="0.04"/>
<rect x="504.1" y="204" width="1" height="203" fill="#00f060" fill-opacity="0.04"/>
<rect x="651.9" y="204" width="1" height="203" fill="#00f060" fill-opacity="0.09"/>
<rect x="507.8" y="204" width="1" height="203" fill="#00f060" fill-opacity="0.09"/>
<rect x="666.3" y="204" width="1" height="203" fill="#00f060" fill-opacity="0.08"/>
<rect x="546.6" y="204" width="1" height="203" fill="#00f060" fill-opacity="0.07"/>
<rect x="504.9" y="204" width="1" height="203" fill="#00f060" fill-opacity="0.03"/>
<rect x="664.5" y="204" width="1" height="203" fill="#00f060" fill-opacity="0.08"/>
<rect x="580.1" y="204" width="1" height="203" fill="#00f060" fill-opacity="0.1"/>
<rect x="562.4" y="204" width="1" height="203" fill="#00f060" fill-opacity="0.09"/>
<rect x="637.0" y="204" width="1" height="203" fill="#00f060" fill-opacity="0.04"/>
<rect x="527.8" y="204" width="1" height="203" fill="#00f060" fill-opacity="0.05"/>
<rect x="525.7" y="204" width="1" height="203" fill="#00f060" fill-opacity="0.07"/>
<rect x="529.3" y="204" width="1" height="203" fill="#00f060" fill-opacity="0.06"/>
<rect x="504.9" y="204" width="1" height="203" fill="#00f060" fill-opacity="0.09"/>
<rect x="547.2" y="204" width="1" height="203" fill="#00f060" fill-opacity="0.06"/>
<rect x="590.8" y="204" width="1" height="203" fill="#00f060" fill-opacity="0.09"/>
<rect x="559.9" y="204" width="1" height="203" fill="#00f060" fill-opacity="0.09"/>
<rect x="575.3" y="204" width="1" height="203" fill="#00f060" fill-opacity="0.07"/>
<rect x="579.5" y="204" width="1" height="203" fill="#00f060" fill-opacity="0.03"/>
<rect x="563.6" y="204" width="1" height="203" fill="#00f060" fill-opacity="0.04"/>
<rect x="480.7" y="204" width="1" height="203" fill="#00f060" fill-opacity="0.09"/>
<rect x="512.7" y="204" width="1" height="203" fill="#00f060" fill-opacity="0.06"/>
<rect x="617.8" y="204" width="1" height="203" fill="#00f060" fill-opacity="0.07"/>
<rect x="541.9" y="204" width="1" height="203" fill="#00f060" fill-opacity="0.07"/>
<rect x="585.5" y="204" width="1" height="203" fill="#00f060" fill-opacity="0.08"/>
<rect x="500.2" y="204" width="1" height="203" fill="#00f060" fill-opacity="0.07"/>
<rect x="527.2" y="204" width="1" height="203" fill="#00f060" fill-opacity="0.05"/>
<rect x="626.7" y="204" width="1" height="203" fill="#00f060" fill-opacity="0.07"/>
<rect x="586.7" y="204" width="1" height="203" fill="#00f060" fill-opacity="0.08"/>
<rect x="653.4" y="204" width="1" height="203" fill="#00f060" fill-opacity="0.06"/>
<rect x="596.4" y="204" width="1" height="203" fill="#00f060" fill-opacity="0.07"/>
<rect x="577.3" y="204" width="1" height="203" fill="#00f060" fill-opacity="0.08"/>
<rect x="565.9" y="204" width="1" height="203" fill="#00f060" fill-opacity="0.07"/>
<rect x="570.8" y="204" width="1" height="203" fill="#00f060" fill-opacity="0.1"/>
<rect x="612.9" y="204" width="1" height="203" fill="#00f060" fill-opacity="0.09"/>
<rect x="659.0" y="204" width="1" height="203" fill="#00f060" fill-opacity="0.05"/>
<rect x="586.3" y="204" width="1" height="203" fill="#00f060" fill-opacity="0.1"/>
<rect x="639.6" y="204" width="1" height="203" fill="#00f060" fill-opacity="0.04"/>
<rect x="503.1" y="204" width="1" height="203" fill="#00f060" fill-opacity="0.06"/>
<rect x="493.8" y="204" width="1" height="203" fill="#00f060" fill-opacity="0.05"/>
<rect x="493.9" y="204" width="1" height="203" fill="#00f060" fill-opacity="0.08"/>
<rect x="628.9" y="204" width="1" height="203" fill="#00f060" fill-opacity="0.09"/>
</g><!--endspec--><g stroke="#000" stroke-width="1" fill="none" shape-rendering="crispEdges">
<rect x="203.5" y="197.5" width="485" height="212"/>
<rect x="203.5" y="472.5" width="485" height="213"/>
<line x1="192" y1="406.5" x2="203" y2="406.5"/><line x1="198" y1="370.5" x2="203" y2="370.5"/><line x1="198" y1="349.5" x2="203" y2="349.5"/><line x1="198" y1="334.5" x2="203" y2="334.5"/><line x1="198" y1="323.5" x2="203" y2="323.5"/><line x1="198" y1="313.5" x2="203" y2="313.5"/><line x1="198" y1="305.5" x2="203" y2="305.5"/><line x1="198" y1="298.5" x2="203" y2="298.5"/><line x1="198" y1="292.5" x2="203" y2="292.5"/><line x1="192" y1="286.5" x2="203" y2="286.5"/><line x1="198" y1="250.5" x2="203" y2="250.5"/><line x1="198" y1="229.5" x2="203" y2="229.5"/><line x1="198" y1="214.5" x2="203" y2="214.5"/><line x1="198" y1="203.5" x2="203" y2="203.5"/><line x1="720.5" y1="198" x2="720.5" y2="409"/><line x1="721" y1="221.5" x2="732" y2="221.5"/><line x1="721" y1="252.5" x2="732" y2="252.5"/><line x1="721" y1="284.5" x2="732" y2="284.5"/><line x1="721" y1="315.5" x2="732" y2="315.5"/><line x1="721" y1="346.5" x2="732" y2="346.5"/><line x1="721" y1="377.5" x2="732" y2="377.5"/><line x1="704" y1="409.5" x2="732" y2="409.5"/><line x1="721" y1="205.5" x2="727" y2="205.5"/><line x1="721" y1="236.5" x2="727" y2="236.5"/><line x1="721" y1="268.5" x2="727" y2="268.5"/><line x1="721" y1="299.5" x2="727" y2="299.5"/><line x1="721" y1="330.5" x2="727" y2="330.5"/><line x1="721" y1="361.5" x2="727" y2="361.5"/><line x1="721" y1="393.5" x2="727" y2="393.5"/><line x1="192" y1="686.5" x2="203" y2="686.5"/><line x1="198" y1="664.5" x2="203" y2="664.5"/><line x1="192" y1="643.5" x2="203" y2="643.5"/><line x1="198" y1="622.5" x2="203" y2="622.5"/><line x1="192" y1="600.5" x2="203" y2="600.5"/><line x1="198" y1="579.5" x2="203" y2="579.5"/><line x1="192" y1="558.5" x2="203" y2="558.5"/><line x1="198" y1="536.5" x2="203" y2="536.5"/><line x1="192" y1="515.5" x2="203" y2="515.5"/><line x1="198" y1="494.5" x2="203" y2="494.5"/><line x1="192" y1="472.5" x2="203" y2="472.5"/><line x1="204.5" y1="686" x2="204.5" y2="697"/><line x1="252.5" y1="686" x2="252.5" y2="691"/><line x1="301.5" y1="686" x2="301.5" y2="697"/><line x1="349.5" y1="686" x2="349.5" y2="691"/><line x1="398.5" y1="686" x2="398.5" y2="697"/><line x1="446.5" y1="686" x2="446.5" y2="691"/><line x1="494.5" y1="686" x2="494.5" y2="697"/><line x1="543.5" y1="686" x2="543.5" y2="691"/><line x1="591.5" y1="686" x2="591.5" y2="697"/><line x1="640.5" y1="686" x2="640.5" y2="691"/><line x1="688.5" y1="686" x2="688.5" y2="697"/>
</g>
<defs><linearGradient id="cb" x1="0" y1="0" x2="0" y2="1">
<stop offset="0" stop-color="#ff0000"/><stop offset="0.175" stop-color="#ff7a00"/><stop offset="0.355" stop-color="#ffff00"/>
<stop offset="0.49" stop-color="#00ff00"/><stop offset="0.615" stop-color="#00ff90"/><stop offset="0.716" stop-color="#00ffff"/>
<stop offset="0.862" stop-color="#0020ff"/><stop offset="0.95" stop-color="#0000b0"/><stop offset="1" stop-color="#000080"/>
</linearGradient></defs>
<rect x="704" y="198" width="16" height="211" fill="url(#cb)"/>
<g font-family="Liberation Sans" font-size="16.3" fill="#000" stroke="#fff" stroke-width="0.12">
<text id="ptitle" x="308.2" y="187" textLength="275.4" lengthAdjust="spacingAndGlyphs" font-size="15.2">RBSP-A/EMFISIS&#160;&#160;HFR Spectra Data</text>
<text id="y5" x="157.0" y="296" textLength="20.5" lengthAdjust="spacingAndGlyphs">10</text>
<text id="s5" x="177.5" y="288" textLength="10.2" lengthAdjust="spacingAndGlyphs">5</text>
<text id="y4" x="157.0" y="415.5" textLength="20.5" lengthAdjust="spacingAndGlyphs">10</text>
<text id="s4" x="177.2" y="407.5" textLength="11.3" lengthAdjust="spacingAndGlyphs">4</text>
<text id="hz" transform="translate(145.5,314.8) rotate(-90)" textLength="22.0" lengthAdjust="spacingAndGlyphs">Hz</text>
<text id="vunit" transform="translate(806.0,356.4) rotate(-90)" textLength="104.6" lengthAdjust="spacingAndGlyphs">V^2/m^2/Hz</text>
<text id="c0" x="736.9" y="231.0" textLength="20.3" lengthAdjust="spacingAndGlyphs">10</text>
<text id="cm0" x="756.6" y="223.0" textLength="5.2" lengthAdjust="spacingAndGlyphs">-</text>
<text id="cs0" x="762.6" y="223.0" textLength="20.3" lengthAdjust="spacingAndGlyphs">10</text>
<text id="c1" x="736.9" y="262.2" textLength="20.3" lengthAdjust="spacingAndGlyphs">10</text>
<text id="cm1" x="756.6" y="254.2" textLength="5.2" lengthAdjust="spacingAndGlyphs">-</text>
<text id="cs1" x="762.6" y="254.2" textLength="20.3" lengthAdjust="spacingAndGlyphs">12</text>
<text id="c2" x="736.9" y="293.5" textLength="20.3" lengthAdjust="spacingAndGlyphs">10</text>
<text id="cm2" x="756.6" y="285.5" textLength="5.2" lengthAdjust="spacingAndGlyphs">-</text>
<text id="cs2" x="762.6" y="285.5" textLength="20.3" lengthAdjust="spacingAndGlyphs">14</text>
<text id="c3" x="736.9" y="324.8" textLength="20.3" lengthAdjust="spacingAndGlyphs">10</text>
<text id="cm3" x="756.6" y="316.8" textLength="5.2" lengthAdjust="spacingAndGlyphs">-</text>
<text id="cs3" x="762.6" y="316.8" textLength="20.3" lengthAdjust="spacingAndGlyphs">16</text>
<text id="c4" x="736.9" y="356.0" textLength="20.3" lengthAdjust="spacingAndGlyphs">10</text>
<text id="cm4" x="756.6" y="348.0" textLength="5.2" lengthAdjust="spacingAndGlyphs">-</text>
<text id="cs4" x="762.6" y="348.0" textLength="20.3" lengthAdjust="spacingAndGlyphs">18</text>
<text id="c5" x="736.9" y="387.2" textLength="20.3" lengthAdjust="spacingAndGlyphs">10</text>
<text id="cm5" x="756.6" y="379.2" textLength="5.2" lengthAdjust="spacingAndGlyphs">-</text>
<text id="cs5" x="762.6" y="379.2" textLength="20.3" lengthAdjust="spacingAndGlyphs">20</text>
<text id="c6" x="736.9" y="418.5" textLength="20.3" lengthAdjust="spacingAndGlyphs">10</text>
<text id="cm6" x="756.6" y="410.5" textLength="5.2" lengthAdjust="spacingAndGlyphs">-</text>
<text id="cs6" x="762.6" y="410.5" textLength="20.3" lengthAdjust="spacingAndGlyphs">22</text>
<text id="by0" x="177.4" y="691.5" textLength="10.1" lengthAdjust="spacingAndGlyphs">0</text>
<text id="by20" x="166.7" y="648.9" textLength="21.6" lengthAdjust="spacingAndGlyphs">20</text>
<text id="by40" x="166.9" y="606.3" textLength="20.6" lengthAdjust="spacingAndGlyphs">40</text>
<text id="by60" x="166.9" y="563.7" textLength="20.6" lengthAdjust="spacingAndGlyphs">60</text>
<text id="by80" x="166.9" y="521.1" textLength="20.6" lengthAdjust="spacingAndGlyphs">80</text>
<text id="by100" x="157.6" y="478.5" textLength="30.3" lengthAdjust="spacingAndGlyphs">100</text>
<text id="bx0" x="198.4" y="717" textLength="12.1" lengthAdjust="spacingAndGlyphs">0</text>
<text id="bx20" x="289.9" y="717" textLength="21.2" lengthAdjust="spacingAndGlyphs">20</text>
<text id="bx40" x="387.5" y="717" textLength="20.2" lengthAdjust="spacingAndGlyphs">40</text>
<text id="bx60" x="483.1" y="717" textLength="21.2" lengthAdjust="spacingAndGlyphs">60</text>
<text id="bx80" x="580.7" y="717" textLength="20.2" lengthAdjust="spacingAndGlyphs">80</text>
<text id="bx100" x="673.6" y="717" textLength="30.3" lengthAdjust="spacingAndGlyphs">100</text>
</g><rect x="216.5" y="481.5" width="54" height="10" rx="2.5" fill="#fff" stroke="#000" stroke-width="1"/><text x="220.5" y="489" font-family="Liberation Sans" font-weight="bold" font-size="7.6" fill="#000" textLength="45.5" lengthAdjust="spacingAndGlyphs">no data set</text></svg>
<div class="a" style="left:103px;top:60px;width:1px;height:732px;background:#d9d9d9"></div>
<div class="a" style="left:838px;top:60px;width:1px;height:732px;background:#d9d9d9"></div>
<div class="a" style="left:103px;top:790px;width:736px;height:2px;background:#dadada"></div>
<!-- status -->
<div class="t" id="stat" style="left:126.1px;top:777px;font-size:11px;color:#2b2b2b;letter-spacing:-0.062px">binding already exists: style_1.colortable to plot_1.colortable &nbsp;(style_1)</div>
</body></html>
